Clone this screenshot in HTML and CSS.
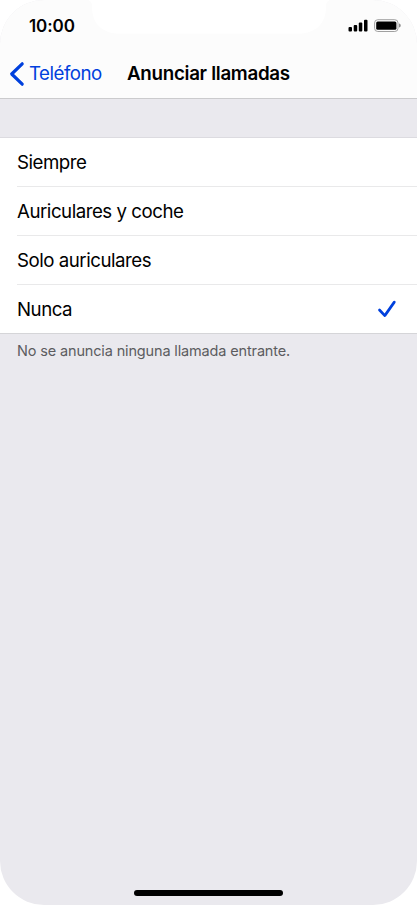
FILE: index.html
```html
<!DOCTYPE html>
<html lang="es">
<head>
<meta charset="utf-8">
<title>Anunciar llamadas</title>
<link rel="stylesheet" href="styles.css">
</head>
<body>
<main class="phone">
  <svg class="notch" width="242" height="34" viewBox="0 0 242 34" aria-hidden="true"><path d="M0 0C3 1 4 3 4 7C4 23 14 33.500 31 33.500H211C228 33.500 238 23 238 7C238 3 239 1 242 0Z"/></svg>
  <header class="header">
    <div class="status">
      <span class="time">10:00</span>
      <svg class="indicators" width="54" height="14" viewBox="0 0 54 14" aria-hidden="true">
        <rect x="0.500" y="8" width="3.500" height="4.500" rx="1"/>
        <rect x="5.700" y="6" width="3.500" height="6.500" rx="1"/>
        <rect x="10.800" y="3.500" width="3.500" height="9" rx="1"/>
        <rect x="16" y="0.800" width="3.500" height="11.700" rx="1"/>
        <rect class="shell" x="26.600" y="0.700" width="23.400" height="11.800" rx="3.200"/>
        <rect x="28.200" y="2.400" width="20.200" height="8.400" rx="1.500"/>
        <path class="terminal" d="M51 4.600C53.300 5.200 53.300 8 51 8.600Z"/>
      </svg>
    </div>
    <nav class="nav">
      <a class="back"><svg class="chevron" width="16" height="26" viewBox="0 0 16 26" aria-hidden="true"><path d="M13.200 2.800L2.700 13L13.200 23.200"/></svg><span class="back-label">Teléfono</span></a>
      <h1 class="title">Anunciar llamadas</h1>
    </nav>
  </header>
  <ul class="list">
    <li class="row"><span>Siempre</span></li>
    <li class="row"><span>Auriculares y coche</span></li>
    <li class="row"><span>Solo auriculares</span></li>
    <li class="row"><span>Nunca</span><svg class="check" width="20" height="20" viewBox="0 0 20 20" aria-hidden="true"><path d="M2.500 11L7.800 16.600L17.300 3.100"/></svg></li>
  </ul>
  <p class="note">No se anuncia ninguna llamada entrante.</p>
  <div class="home"></div>
</main>
</body>
</html>
```
FILE: styles.css
```css
* { box-sizing: border-box; }
body { margin: 0; background: #fff; font-family: Inter, "Liberation Sans", sans-serif; color: #000; }
.phone { position: relative; display: flex; flex-direction: column; width: 417px; height: 905px; overflow: hidden; background: #eae9ee; border-radius: 44px; }
.notch { position: absolute; top: 0; left: 88px; fill: #fff; }
.header { height: 99px; background: #fcfcfc; border-bottom: 1px solid #cbcbcd; }
.status { display: flex; justify-content: space-between; align-items: center; height: 50px; padding: 2px 15px 0 29px; }
.time { font-size: 17px; font-weight: 600; line-height: 20px; letter-spacing: -0.1px; }
.shell { fill: none; stroke: #a0a0a0; stroke-width: 1; }
.terminal { fill: #8c8c8c; }
.nav { display: flex; align-items: center; height: 47px; padding-left: 9px; }
.back { display: flex; align-items: center; width: 118px; color: #0040dd; font-size: 18.700px; letter-spacing: -0.500px; }
.chevron { margin-right: 4px; fill: none; stroke: #0040dd; stroke-width: 3.200; stroke-linecap: round; stroke-linejoin: round; }
.title { margin: 0; font-size: 18.800px; font-weight: 600; letter-spacing: -0.310px; white-space: nowrap; }
.list { list-style: none; margin: 38px 0 0; padding: 0; background: #fff; border-top: 1px solid #dcdbe0; border-bottom: 1px solid #d5d5d8; }
.row { display: flex; align-items: center; justify-content: space-between; height: 49px; margin-left: 17px; padding-right: 20px; border-bottom: 1px solid #e9e9ea; font-size: 18.700px; letter-spacing: -0.480px; white-space: nowrap; }
.row:last-child { height: 48px; border-bottom: 0; }
.check { fill: none; stroke: #0040dd; stroke-width: 2.700; stroke-linecap: round; stroke-linejoin: round; }
.note { margin: 8px 0 0 17px; color: #5c5c60; font-size: 14.500px; line-height: 17px; letter-spacing: -0.150px; white-space: nowrap; }
.home { width: 149px; height: 6px; margin: auto auto 9px 134px; border-radius: 3px; background: #000; }
```
